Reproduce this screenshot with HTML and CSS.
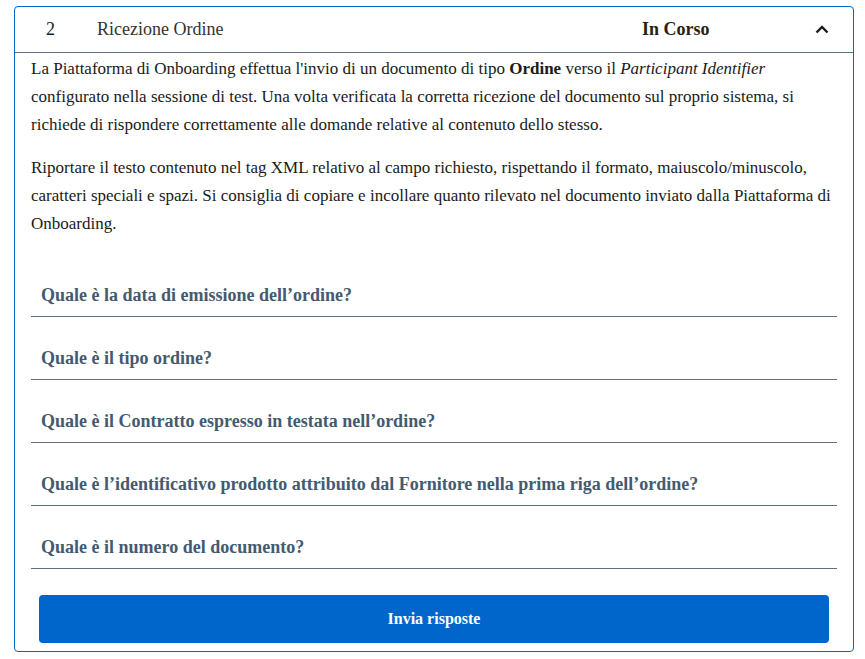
FILE: index.html
```html
<!DOCTYPE html>
<html lang="it">
<head>
<meta charset="utf-8">
<title>Ricezione Ordine</title>
<link rel="stylesheet" href="styles.css">
</head>
<body>
<section class="card">
  <header class="card-header">
    <span class="step-num">2</span>
    <span class="step-title">Ricezione Ordine</span>
    <span class="step-status">In Corso</span>
    <span class="chevron">
      <svg width="14" height="9" viewBox="0 0 14 9"><path d="M1.5 7.5 L7 2 L12.5 7.5" fill="none" stroke="#1a1a1a" stroke-width="2.4"/></svg>
    </span>
  </header>
  <div class="card-body">
    <p class="intro">La Piattaforma di Onboarding effettua l'invio di un documento di tipo <b>Ordine</b> verso il <i>Participant Identifier</i> configurato nella sessione di test. Una volta verificata la corretta ricezione del documento sul proprio sistema, si richiede di rispondere correttamente alle domande relative al contenuto dello stesso.</p>
    <p class="intro">Riportare il testo contenuto nel tag XML relativo al campo richiesto, rispettando il formato, maiuscolo/minuscolo, caratteri speciali e spazi. Si consiglia di copiare e incollare quanto rilevato nel documento inviato dalla Piattaforma di Onboarding.</p>
    <div class="questions">
      <div class="question">Quale è la data di emissione dell’ordine?</div>
      <div class="question">Quale è il tipo ordine?</div>
      <div class="question">Quale è il Contratto espresso in testata nell’ordine?</div>
      <div class="question">Quale è l’identificativo prodotto attribuito dal Fornitore nella prima riga dell’ordine?</div>
      <div class="question">Quale è il numero del documento?</div>
    </div>
    <button class="submit">Invia risposte</button>
  </div>
</section>
</body>
</html>
```
FILE: styles.css
```css
html, body {
  margin: 0;
  padding: 0;
  background: #ffffff;
}
body {
  padding: 6px 11px 0 14px;
  font-family: "Liberation Serif", "Times New Roman", serif;
  color: #1a1a1a;
}
.card {
  width: 840px;
  height: 646px;
  box-sizing: border-box;
  border: 1px solid #0066cc;
  border-radius: 4px;
  display: flex;
  flex-direction: column;
}
.card-header {
  height: 46px;
  box-sizing: border-box;
  border-bottom: 1px solid #5c6f82;
  display: flex;
  align-items: center;
  font-size: 18px;
}
.step-num {
  margin-left: 31px;
  width: 51px;
  color: #1a1a1a;
}
.step-title {
  flex: 1;
  color: #333333;
}
.step-status {
  font-weight: bold;
  color: #2a1f10;
  width: 173px;
}
.chevron {
  width: 38px;
  display: flex;
  align-items: center;
}
.card-body {
  padding: 2px 16px 0 16px;
  display: flex;
  flex-direction: column;
}
.intro {
  margin: 0 0 15px 0;
  font-size: 17px;
  line-height: 28px;
  color: #1a1a1a;
}
.intro + .intro {
  margin-bottom: 16px;
}
.questions {
  display: flex;
  flex-direction: column;
}
.question {
  padding: 29px 10px 9px 10px;
  line-height: 24px;
  font-size: 18px;
  font-weight: bold;
  color: #435a70;
  border-bottom: 1px solid #5c6f82;
}
.submit {
  margin: 26px 8px 0 8px;
  height: 48px;
  border: none;
  border-radius: 4px;
  background: #0066cc;
  color: #ffffff;
  font-family: "Liberation Serif", "Times New Roman", serif;
  font-size: 16px;
  font-weight: bold;
  cursor: pointer;
}
```
